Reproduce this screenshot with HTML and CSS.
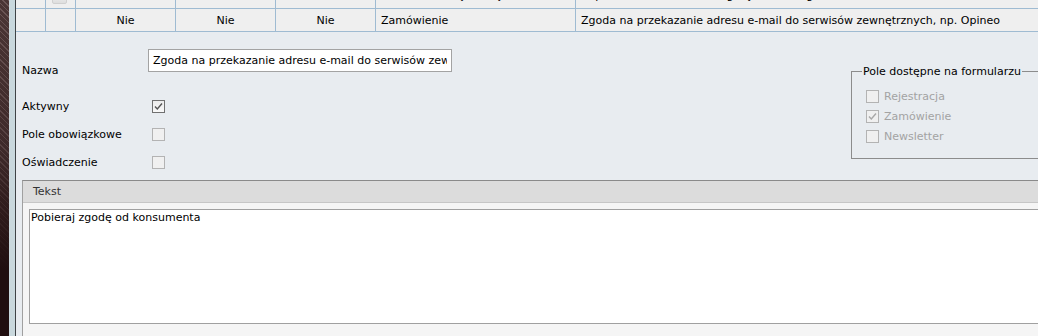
FILE: index.html
```html
<!DOCTYPE html>
<html lang="pl">
<head>
<meta charset="utf-8">
<title>Zgody</title>
<link rel="stylesheet" href="styles.css">
</head>
<body>
<div class="desk"></div>
<div class="win">
  <div class="content">
    <div class="grid">
      <div class="row row-prev">
        <div class="cell c1"></div>
        <div class="cell c2"><span class="knob"></span></div>
        <div class="cell c3"></div>
        <div class="cell c4"></div>
        <div class="cell c5"></div>
        <div class="cell c6"><span class="clip">Newsletter, Rejestracja</span></div>
        <div class="cell c7"><span class="clip">Zapis na newsletter oraz zgody marketingowe</span></div>
      </div>
      <div class="row row-cur">
        <div class="cell c1"></div>
        <div class="cell c2"></div>
        <div class="cell c3 center">Nie</div>
        <div class="cell c4 center">Nie</div>
        <div class="cell c5 center">Nie</div>
        <div class="cell c6">Zamówienie</div>
        <div class="cell c7">Zgoda na przekazanie adresu e-mail do serwisów zewnętrznych, np. Opineo</div>
      </div>
    </div>

    <div class="form">
      <div class="top">
        <div class="fields">
          <div class="frow frow-name">
            <label class="lbl lbl-name">Nazwa</label>
            <input class="txt" type="text" value="Zgoda na przekazanie adresu e-mail do serwisów zewnętrznych, np. Opineo">
          </div>
          <div class="frow frow-first">
            <span class="lbl">Aktywny</span>
            <span class="cb cb-on"><svg width="11" height="11" viewBox="0 0 11 11"><polyline points="2,5.5 4.3,8 9,2.5" fill="none" stroke="#555" stroke-width="1.4"/></svg></span>
          </div>
          <div class="frow">
            <span class="lbl">Pole obowiązkowe</span>
            <span class="cb cb-dis"></span>
          </div>
          <div class="frow">
            <span class="lbl">Oświadczenie</span>
            <span class="cb cb-dis"></span>
          </div>
        </div>
        <fieldset class="group">
          <legend>Pole dostępne na formularzu</legend>
          <div class="grow"><span class="cb cb-dis"></span><span class="glbl">Rejestracja</span></div>
          <div class="grow"><span class="cb cb-dis"><svg width="11" height="11" viewBox="0 0 11 11"><polyline points="2,5.5 4.3,8 9,2.5" fill="none" stroke="#a8a8a8" stroke-width="1.4"/></svg></span><span class="glbl">Zamówienie</span></div>
          <div class="grow"><span class="cb cb-dis"></span><span class="glbl">Newsletter</span></div>
        </fieldset>
      </div>

      <div class="panel">
        <div class="panel-head">Tekst</div>
        <div class="panel-body">
          <div class="area">Pobieraj zgodę od konsumenta</div>
        </div>
      </div>
    </div>
  </div>
</div>
</body>
</html>
```

FILE: styles.css
```css
html, body {
  margin: 0;
  padding: 0;
  height: 336px;
  overflow: hidden;
}
body {
  display: flex;
  font-family: "DejaVu Sans", "Liberation Sans", sans-serif;
  font-size: 11px;
  line-height: 13px;
  color: #000;
  background: #e8ecf0;
}
.desk {
  width: 9px;
  flex: none;
  background:
    linear-gradient(to bottom, rgba(32,14,14,0) 0%, rgba(32,14,14,0.3) 45%, #200e0f 80%),
    repeating-linear-gradient(45deg, #4a3535 0 3px, #6c5656 3px 4px);
}
.win {
  flex: 1;
  min-width: 0;
  border-left: 6px solid #c9d8dd;
  display: flex;
}
.content {
  flex: 1;
  min-width: 0;
  border-left: 1px solid #3f4346;
  display: flex;
  flex-direction: column;
}

/* grid */
.grid {
  background: #efefef;
}
.row {
  display: flex;
  border-bottom: 1px solid #9fbbd2;
}
.row-prev { height: 8px; }
.row-cur { height: 22px; }
.cell {
  box-sizing: border-box;
  border-right: 1px solid #9fbbd2;
  overflow: hidden;
  white-space: nowrap;
  flex: none;
  padding-left: 5px;
  display: flex;
  align-items: center;
}
.row-prev .cell { align-items: flex-start; }
.c1 { width: 30px; padding: 0; }
.c2 { width: 30px; padding: 0; }
.c3, .c4, .c5 { width: 100px; }
.c6 { width: 200px; }
.c7 { flex: 1; border-right: none; }
.center { justify-content: center; padding-left: 0; }
.clip {
  margin-top: -11px;
  line-height: 13px;
}
.knob {
  display: block;
  width: 15px;
  height: 12px;
  margin: -8px 0 0 6px;
  box-sizing: border-box;
  border: 1px solid #d0d0d0;
  border-radius: 2px;
  background: linear-gradient(#f4f4f4, #dedede);
}

/* form */
.form {
  flex: 1;
  padding: 17px 0 0 6px;
  background: #e8ecf0;
}
.top {
  display: flex;
  align-items: flex-start;
}
.fields {
  display: flex;
  flex-direction: column;
}
.frow {
  display: flex;
  align-items: center;
  height: 28px;
}
.frow-name {
  align-items: flex-start;
  margin-bottom: 15px;
}
.lbl {
  width: 126px;
  flex: none;
}
.lbl-name {
  margin-top: 15px;
}
.txt {
  width: 304px;
  height: 23px;
  box-sizing: border-box;
  margin: 0;
  border: 1px solid #a3a3a3;
  padding: 0 4px;
  font: inherit;
  color: #000;
  background: #fff;
  outline: none;
}
.cb {
  box-sizing: border-box;
  width: 13px;
  height: 13px;
  flex: none;
  display: flex;
  align-items: center;
  justify-content: center;
  background: linear-gradient(#ececec, #f8f8f8);
}
.frow .cb { margin-left: 4px; }
.cb-on {
  border: 1px solid #707070;
}
.cb-dis {
  border: 1px solid #b3b3b3;
  background: #f0f0f0;
}

.group {
  margin: 16px -30px 0 auto;
  width: 217px;
  box-sizing: border-box;
  border: 1px solid #8c8c8c;
  padding: 8px 0 12px 14px;
  min-width: 0;
}
.group legend {
  margin-left: -4px;
  padding: 0 1px;
  line-height: 13px;
}
.grow {
  display: flex;
  align-items: center;
  height: 20px;
}
.glbl {
  margin-left: 5px;
  color: #a3a3a3;
}

/* text panel */
.panel {
  margin: 4px -30px 0 0;
  border-top: 1px solid #8a8a8a;
  border-left: 1px solid #a0a0a0;
  background: #f5f5f5;
  height: 200px;
}
.panel-head {
  height: 21px;
  line-height: 21px;
  padding-left: 10px;
  background: #dcdcdc;
  border-bottom: 1px solid #c6c6c6;
  color: #333;
}
.panel-body {
  padding: 6px 0 0 6px;
}
.area {
  box-sizing: border-box;
  height: 115px;
  border: 1px solid #a0a0a0;
  border-right: none;
  background: #fff;
  padding: 1px 0 0 1px;
}
```
